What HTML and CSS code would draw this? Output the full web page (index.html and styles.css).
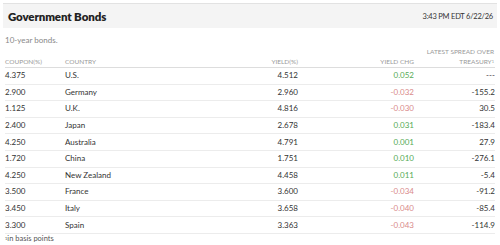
FILE: index.html
```html
<!DOCTYPE html>
<html lang="en">
<head>
  <meta charset="UTF-8">
  <title>Government Bonds</title>
  <link rel="stylesheet" href="styles.css">
</head>
<body>
  <div class="module">
    <div class="head">
      <h2 class="title">Government Bonds</h2>
      <span class="stamp">3:43 PM EDT 6/22/26</span>
    </div>
    <p class="caption">10-year bonds.</p>
    <table class="bonds">
      <thead>
        <tr>
          <th class="coupon">Coupon(%)</th>
          <th class="country">Country</th>
          <th class="num">Yield(%)</th>
          <th class="num">Yield chg</th>
          <th class="num spread">Latest spread over<br>Treasury<sup>1</sup></th>
        </tr>
      </thead>
      <tbody>
        <tr><td>4.375</td><td>U.S.</td><td class="num">4.512</td><td class="num up">0.052</td><td class="num">---</td></tr>
        <tr><td>2.900</td><td>Germany</td><td class="num">2.960</td><td class="num down">-0.032</td><td class="num">-155.2</td></tr>
        <tr><td>1.125</td><td>U.K.</td><td class="num">4.816</td><td class="num down">-0.030</td><td class="num">30.5</td></tr>
        <tr><td>2.400</td><td>Japan</td><td class="num">2.678</td><td class="num up">0.031</td><td class="num">-183.4</td></tr>
        <tr><td>4.250</td><td>Australia</td><td class="num">4.791</td><td class="num up">0.001</td><td class="num">27.9</td></tr>
        <tr><td>1.720</td><td>China</td><td class="num">1.751</td><td class="num up">0.010</td><td class="num">-276.1</td></tr>
        <tr><td>4.250</td><td>New Zealand</td><td class="num">4.458</td><td class="num up">0.011</td><td class="num">-5.4</td></tr>
        <tr><td>3.500</td><td>France</td><td class="num">3.600</td><td class="num down">-0.034</td><td class="num">-91.2</td></tr>
        <tr><td>3.450</td><td>Italy</td><td class="num">3.658</td><td class="num down">-0.040</td><td class="num">-85.4</td></tr>
        <tr><td>3.300</td><td>Spain</td><td class="num">3.363</td><td class="num down">-0.043</td><td class="num">-114.9</td></tr>
      </tbody>
    </table>
    <p class="note"><sup>1</sup>in basis points</p>
  </div>
</body>
</html>
```

FILE: styles.css
```css
body {
  margin: 0;
  background: white;
  font-family: "Lato", "Open Sans", sans-serif;
  color: #333;
}

.module {
  padding: 3px 5px 0 5px;
}

.head {
  display: flex;
  align-items: center;
  justify-content: space-between;
  background: #f4f4f4;
  border-top: 1px solid #e2e2e2;
  height: 24px;
  margin: 0 -2px;
  padding: 0 4px 0 5px;
}

.title {
  margin: 0;
  font-size: 11.5px;
  font-weight: 800;
  color: #222;
  letter-spacing: -0.01em;
}

.stamp {
  font-size: 7.5px;
  color: #333;
  letter-spacing: -0.03em;
}

.caption {
  margin: 6px 0 0 0;
  font-size: 8px;
  color: #888;
  height: 13px;
  line-height: 13px;
}

.bonds {
  width: 100%;
  border-collapse: collapse;
  font-size: 8px;
}

.bonds th {
  font-weight: 400;
  font-size: 6.5px;
  text-transform: uppercase;
  color: #999;
  text-align: left;
  vertical-align: bottom;
  line-height: 10px;
  padding: 0;
  border-bottom: 1px solid #ddd;
}

.bonds th.spread {
  padding-right: 1px;
}

.bonds sup {
  font-size: 4px;
  vertical-align: top;
}

.bonds td {
  height: 15.6px;
  padding: 0;
  border-bottom: 1px solid #ececec;
  line-height: 15px;
}

.coupon {
  width: 60px;
}

.bonds .num {
  text-align: right;
}

.bonds td.num:nth-child(3) {
  width: 60px;
}

.bonds td.num:nth-child(4) {
  width: 116px;
}

.bonds td.num:nth-child(5) {
  width: 81px;
}

.up {
  color: #55aa55;
}

.down {
  color: #d98a8a;
}

.note {
  margin: 0;
  font-size: 7.5px;
  line-height: 10px;
  color: #555;
}

.note sup {
  font-size: 4px;
  vertical-align: top;
}
```
